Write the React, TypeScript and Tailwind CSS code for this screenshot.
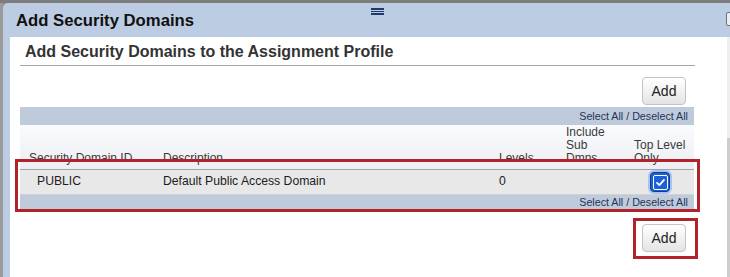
import React from 'react'

// Small grey push button used twice in the dialog
function AddButton() {
    return (
        <button className="h-[28px] w-[44px] rounded-[4px] border border-[#c4c4c4] bg-linear-to-b from-[#ffffff] to-[#e4e4e4] text-[14px] leading-none text-[#222]">
            Add
        </button>
    )
}

function CheckedBox() {
    return (
        <div className="flex h-[24px] w-[24px] items-center justify-center rounded-[6px] bg-[#a8c4ef]">
            <div className="flex h-[20px] w-[20px] items-center justify-center rounded-[4px] border-[1.5px] border-[#0f3d8e] bg-[#1b61d8]">
                <div className="flex h-[15px] w-[15px] items-center justify-center rounded-[2px] border border-white">
                    <svg width="11" height="11" viewBox="0 0 12 12">
                        <path d="M2.2 6.4 L4.8 8.8 L9.8 3.2" fill="none" stroke="white" strokeWidth="2" strokeLinecap="round" strokeLinejoin="round" />
                    </svg>
                </div>
            </div>
        </div>
    )
}

const COLS = 'grid grid-cols-[143px_336px_67px_68px_60px]'

export default function App() {
    return (
        <div className="relative flex h-[277px] w-[730px] flex-col overflow-hidden bg-[#8e8e8e] font-['Liberation_Sans',Arial,sans-serif]">
            {/* page strip behind the dialog */}
            <div className="h-[3px] bg-[#7d7d7d]" />

            <div className="flex flex-1">
                <div className="w-[3px] bg-[#9a9a9a]" />

                {/* Dialog */}
                <div className="flex w-[727px] flex-col">
                    <header className="relative flex h-[34px] items-center rounded-tl-[5px] bg-[#bccde3] pl-[13px] pt-[3px]">
                        <h1 className="text-[16.7px] font-bold leading-none text-[#111]">Add Security Domains</h1>
                        {/* drag handle */}
                        <div className="absolute left-[368px] top-[5px] flex w-[13px] flex-col gap-[1px]">
                            <div className="h-[1.5px] bg-[#1e3a68]" />
                            <div className="h-[1.5px] bg-[#1e3a68]" />
                            <div className="h-[1.5px] bg-[#1e3a68]" />
                        </div>
                        {/* close box, cut off at the window edge */}
                        <div className="absolute right-[-12px] top-[9px] h-[14px] w-[16px] rounded-[2px] border border-[#6f6f6f] bg-[#e9eef5]" />
                    </header>

                    <div className="flex flex-1">
                        <div className="w-[7px] bg-[#bccde3]" />

                        <main className="w-[717px] bg-white">
                            <div className="ml-[10px] w-[675px]">
                                <h2 className="mt-[6px] pl-[5px] text-[16px] font-bold leading-[18px] text-[#333]">
                                    Add Security Domains to the Assignment Profile
                                </h2>
                                <div className="mt-[4px] h-px bg-[#a6a6a6]" />

                                <div className="mt-[11px] flex justify-end pr-[9px]">
                                    <AddButton />
                                </div>

                                {/* Table */}
                                <div className="mt-[2px] w-[674px]">
                                    <div className="flex h-[18px] items-center justify-end bg-[#bfcbdb] pr-[6px] text-[10.7px] text-[#1d3358]">
                                        Select All / Deselect All
                                    </div>
                                    <div className={`${COLS} h-[44px] items-end bg-linear-to-b from-[#fafbfd] to-[#eceef3] pb-[4px] text-[12px] leading-[13px] text-[#3a3a3a]`}>
                                        <div className="pl-[9px]">Security Domain ID</div>
                                        <div>Description</div>
                                        <div>Levels</div>
                                        <div>Include<br />Sub<br />Dmns.</div>
                                        <div>Top Level<br />Only</div>
                                    </div>
                                    <div className="h-px bg-[#a3a3a3]" />
                                    <div className={`${COLS} h-[24px] items-center bg-[#e8e8e8] text-[12.2px] text-[#1c1c1c]`}>
                                        <div className="pb-[2px] pl-[17px]">PUBLIC</div>
                                        <div className="pb-[2px]">Default Public Access Domain</div>
                                        <div className="pb-[2px]">0</div>
                                        <div />
                                        <div className="flex justify-center pr-[8px]">
                                            <CheckedBox />
                                        </div>
                                    </div>
                                    <div className="h-px bg-[#d2d2d2]" />
                                    <div className="flex h-[15px] items-center justify-end bg-[#bfcbdb] pr-[6px] text-[10.7px] text-[#1d3358]">
                                        Select All / Deselect All
                                    </div>
                                </div>

                                <div className="mt-[14px] flex justify-end pr-[9px]">
                                    <AddButton />
                                </div>
                            </div>
                        </main>

                        {/* scrollbar sliver */}
                        <div className="flex w-[3px] flex-col">
                            <div className="h-[101px] bg-[#efefef]" />
                            <div className="flex-1 bg-[#cdcdcd]" />
                        </div>
                    </div>
                </div>
            </div>

            {/* red annotation boxes */}
            <div className="pointer-events-none absolute left-[15px] top-[159px] h-[53px] w-[685px] border-[3px] border-[#b1232a]" />
            <div className="pointer-events-none absolute left-[633px] top-[218px] h-[41px] w-[65px] border-[3px] border-[#b1232a]" />
        </div>
    )
}
